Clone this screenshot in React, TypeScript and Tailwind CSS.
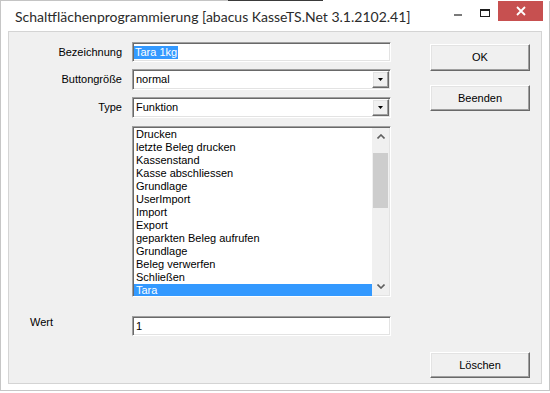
const items = [
  "Drucken",
  "letzte Beleg drucken",
  "Kassenstand",
  "Kasse abschliessen",
  "Grundlage",
  "UserImport",
  "Import",
  "Export",
  "geparkten Beleg aufrufen",
  "Grundlage",
  "Beleg verwerfen",
  "Schließen",
  "Tara",
];

// classic 3D borders
const sunken =
  "border border-t-[#a0a0a0] border-l-[#a0a0a0] border-b-white border-r-white shadow-[inset_1px_1px_0_#696969,inset_-1px_-1px_0_#e3e3e3] bg-white";
const raised =
  "border border-t-white border-l-white border-b-[#696969] border-r-[#696969] shadow-[inset_-1px_-1px_0_#a0a0a0,inset_1px_1px_0_#e3e3e3] bg-[#f0f0f0]";

function Combo({ value }: { value: string }) {
  return (
    <div className={`${sunken} ml-[10px] flex h-[21px] w-[259px] items-center p-[1px]`}>
      <span className="flex-1 pl-[2px] leading-[13px]">{value}</span>
      <div className={`${raised} flex h-[17px] w-[17px] items-center justify-center`}>
        <svg width="5" height="3" viewBox="0 0 5 3">
          <path d="M0 0h5L2.5 3z" fill="#000" />
        </svg>
      </div>
    </div>
  );
}

function Chevron({ up }: { up?: boolean }) {
  return (
    <svg width="8" height="5" viewBox="0 0 8 5">
      <path
        d={up ? "M0.5 4.5L4 1l3.5 3.5" : "M0.5 0.5L4 4l3.5-3.5"}
        fill="none"
        stroke="#606060"
        strokeWidth="1.6"
      />
    </svg>
  );
}

export default function App() {
  return (
    <div className="h-[393px] w-[550px] bg-white font-['Liberation_Sans',Arial,sans-serif] text-[11px] text-black">
      <div className="flex h-px">
        <div className="w-[228px] bg-[#c4c4c4]" />
        <div className="w-[95px] bg-[#3a3a3a]" />
      </div>
      <div className="flex h-[390px] flex-col border-x border-b border-[#c6c6c6]">
        {/* title bar */}
        <div className="flex h-[30px] items-start">
          <div className="whitespace-nowrap pl-[14px] pt-[6px] font-['Lato',sans-serif] text-[14px] leading-[20px] text-[#2b2b2b]">
            Schaltflächenprogrammierung [abacus KasseTS.Net 3.1.2102.41]
          </div>
          <div className="ml-auto mr-[6px] flex shrink-0 items-start">
            <svg width="8" height="20" viewBox="0 0 8 20" className="shrink-0">
              <rect x="0" y="13" width="8" height="2" fill="#7a7a7a" />
            </svg>
            <div className="ml-[18px] mt-[8px] h-[8px] w-[10px] shrink-0 border border-t-2 border-[#1e1e1e]" />
            <div className="ml-[8px] flex h-[20px] w-[45px] shrink-0 items-center justify-center bg-[#c75050]">
              <svg width="10" height="10" viewBox="0 0 10 10">
                <path d="M1 1l8 8M9 1l-8 8" stroke="#fff" strokeWidth="1.8" />
              </svg>
            </div>
          </div>
        </div>

        {/* client panel */}
        <div className="mx-[7px] flex h-[353px] border border-[#d4d4d4] bg-[#f0f0f0]">
          <div className="flex flex-col pt-[10px]">
            <div className="flex items-center">
              <div className="w-[113px] text-right">Bezeichnung</div>
              <div className={`${sunken} ml-[10px] flex h-[20px] w-[259px] items-center pl-[1px]`}>
                <span className="bg-[#3399ff] px-[1px] leading-[13px] text-white">Tara 1kg</span>
              </div>
            </div>
            <div className="mt-[7px] flex items-center">
              <div className="w-[113px] text-right">Buttongröße</div>
              <Combo value="normal" />
            </div>
            <div className="mt-[7px] flex items-center">
              <div className="w-[113px] text-right">Type</div>
              <Combo value="Funktion" />
            </div>
            <div className="mt-[8px] flex">
              <div className="w-[113px]" />
              <div className={`${sunken} ml-[10px] flex h-[171px] w-[259px] overflow-hidden p-[1px]`}>
                <div className="flex-1">
                  {items.map((it, i) => (
                    <div
                      key={i}
                      className={`h-[13px] pl-[2px] leading-[13px] ${
                        i === items.length - 1 ? "bg-[#3399ff] text-white" : ""
                      }`}
                    >
                      {it}
                    </div>
                  ))}
                </div>
                <div className="flex h-[167px] w-[17px] flex-col bg-[#f0f0f0]">
                  <div className="flex h-[17px] items-center justify-center">
                    <Chevron up />
                  </div>
                  <div className="flex-1 px-[1px] pt-[8px]">
                    <div className="h-[55px] bg-[#cdcdcd]" />
                  </div>
                  <div className="flex h-[17px] items-center justify-center">
                    <Chevron />
                  </div>
                </div>
              </div>
            </div>
            <div className="mt-[19px] flex items-start">
              <div className="w-[113px] pl-[21px] leading-[13px]">Wert</div>
              <div className={`${sunken} ml-[10px] flex h-[20px] w-[259px] items-center pl-[3px]`}>
                <span className="leading-[13px]">1</span>
              </div>
            </div>
          </div>

          <div className="ml-[39px] flex flex-col pb-[5px] pt-[12px]">
            <button className={`${raised} h-[27px] w-[100px] text-[11px]`}>OK</button>
            <button className={`${raised} mt-[14px] h-[26px] w-[100px] text-[11px]`}>Beenden</button>
            <button className={`${raised} mt-auto h-[26px] w-[100px] text-[11px]`}>Löschen</button>
          </div>
        </div>
      </div>
    </div>
  );
}
